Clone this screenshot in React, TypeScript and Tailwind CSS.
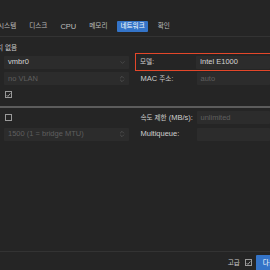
import { ChevronDown, ChevronsUpDown } from 'lucide-react';

const tabs = ['시스템', '디스크', 'CPU', '메모리', '네트워크', '확인'];

// Korean glyphs in the reference run narrower than the Latin text
function K({ children }: { children: React.ReactNode }) {
  return <span className="text-[6.6px]">{children}</span>;
}

function Check({ checked }: { checked?: boolean }) {
  return (
    <span className="flex h-[7px] w-[7px] items-center justify-center border border-[#9a9a9a]">
      {checked && (
        <svg viewBox="0 0 8 8" className="h-[6px] w-[6px]" fill="none" stroke="#c8c8c8" strokeWidth={1.2}>
          <path d="M1 4.2l2 2L7 1.5" />
        </svg>
      )}
    </span>
  );
}

function Field({
  text,
  muted,
  icon,
}: {
  text: string;
  muted?: boolean;
  icon?: 'down' | 'spin';
}) {
  return (
    <div className="flex h-[13px] flex-1 items-center justify-between rounded-[1px] bg-[#2c2c2c] pl-[4px] pr-[3px]">
      <span className={muted ? 'text-[#5f5f5f]' : 'text-[#d4d4d4]'}>{text}</span>
      {icon === 'down' && <ChevronDown className="h-[7px] w-[7px] text-[#5a5a5a]" strokeWidth={2} />}
      {icon === 'spin' && <ChevronsUpDown className="h-[8px] w-[8px] text-[#5a5a5a]" strokeWidth={2} />}
    </div>
  );
}

export default function App() {
  return (
    <div className="flex h-[270px] w-[270px] flex-col overflow-hidden bg-[#252525] font-['Liberation_Sans','Noto_Sans_CJK_KR',sans-serif] text-[7.5px] leading-none text-[#cfcfcf]">
      {/* Tab bar */}
      <div className="h-[37px] shrink-0 border-b border-[#333333] pt-[21px]">
        <div className="ml-[-5px] flex gap-[7px]">
          {tabs.map((t) => (
            <span
              key={t}
              className={
                t === '네트워크'
                  ? 'flex h-[11px] items-center rounded-[1px] bg-[#3474c8] px-[3px] text-white'
                  : 'flex h-[11px] items-center px-[3px] text-[#bdbdbd]'
              }
            >
              {t === 'CPU' ? t : <K>{t}</K>}
            </span>
          ))}
        </div>
      </div>

      {/* Top label */}
      <div className="ml-[-3px] mt-[7px] flex h-[9px] items-center text-[#c8c8c8]">
        <K>치 없음</K>
      </div>

      {/* Rows */}
      <div className="flex flex-col">
        <div className="flex h-[18px]">
          <div className="flex w-[135px] items-center pl-[4px] pr-[6px]">
            <Field text="vmbr0" icon="down" />
          </div>
          <div className="flex flex-1 items-center border-[1.5px] border-r-0 border-[#e4472a] pl-[4px]">
            <span className="w-[56px]">
              <K>모델:</K>
            </span>
            <Field text="Intel E1000" />
          </div>
        </div>
        <div className="flex h-[15px] items-center">
          <div className="flex w-[135px] items-center pl-[4px] pr-[6px]">
            <Field text="no VLAN" muted icon="spin" />
          </div>
          <div className="flex flex-1 items-center pl-[5.5px]">
            <span className="w-[56px]">
              MAC <K>주소:</K>
            </span>
            <Field text="auto" muted />
          </div>
        </div>
        <div className="flex h-[20px] items-start pl-[5px] pt-[5px]">
          <Check checked />
        </div>

        <div className="h-[2px] bg-[#5c5c5c]" />

        <div className="flex h-[19px] items-center">
          <div className="flex w-[135px] items-center pl-[5px]">
            <Check />
          </div>
          <div className="flex flex-1 items-center pl-[5.5px]">
            <span className="w-[56px]">
              <K>속도 제한</K> (MB/s):
            </span>
            <Field text="unlimited" muted />
          </div>
        </div>
        <div className="flex h-[14px] items-center">
          <div className="flex w-[135px] items-center pl-[4px] pr-[6px]">
            <Field text="1500 (1 = bridge MTU)" muted icon="spin" />
          </div>
          <div className="flex flex-1 items-center pl-[5.5px]">
            <span className="w-[56px]">Multiqueue:</span>
            <Field text="" />
          </div>
        </div>
      </div>

      {/* Footer */}
      <div className="mt-auto flex h-[19px] shrink-0 items-start justify-end border-t border-[#333333] pt-[3px]">
        <div className="flex h-[15px] items-center gap-[5px]">
          <span className="text-[#c8c8c8]">
            <K>고급</K>
          </span>
          <Check checked />
        </div>
        <div className="ml-[4px] mr-[-12px] flex h-[17px] items-center rounded-[1px] bg-[#3474c8] px-[7px] text-white">
          <K>다음</K>
        </div>
      </div>
    </div>
  );
}
